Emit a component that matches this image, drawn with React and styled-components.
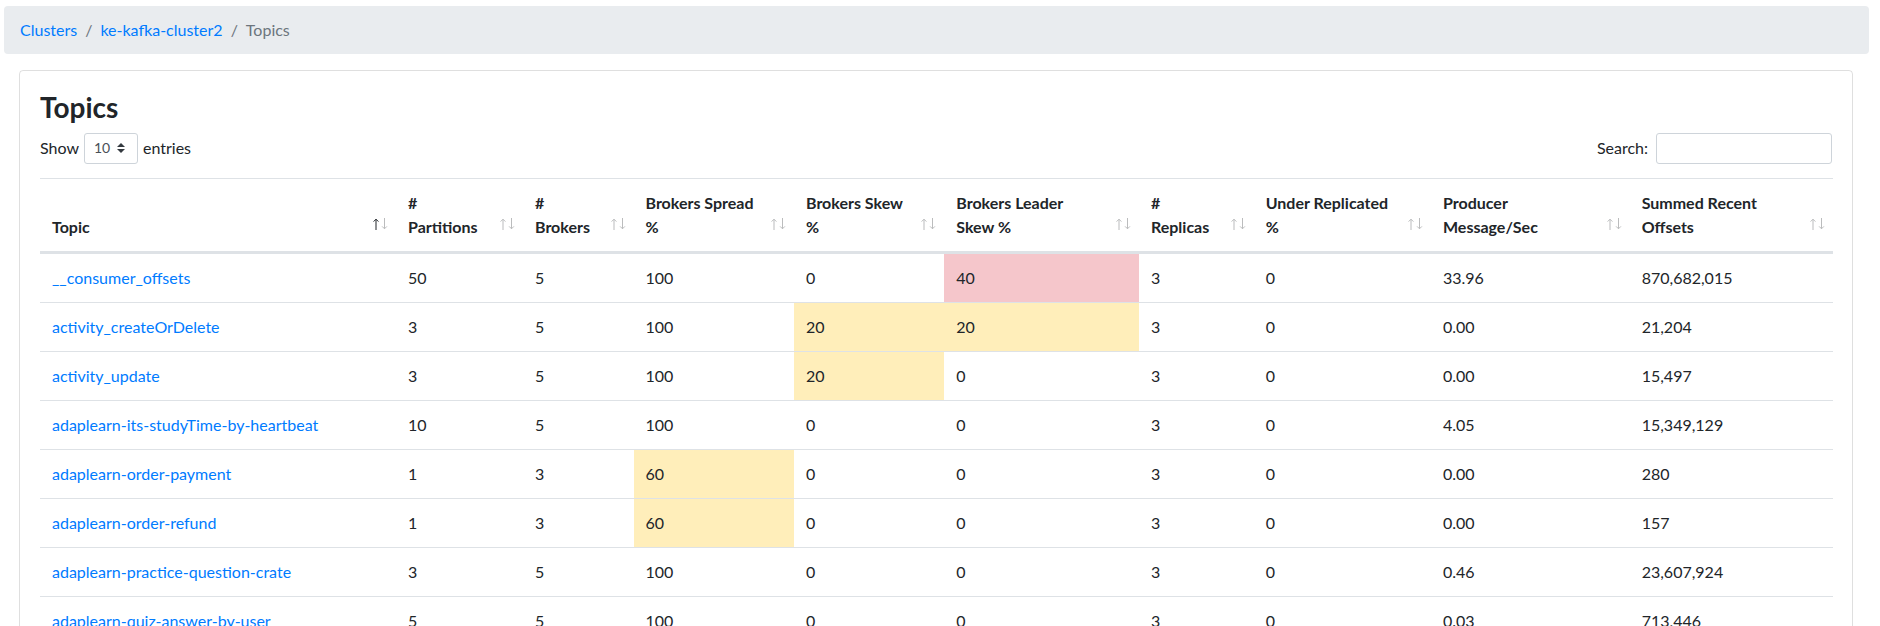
import React from "react";
import styled, { createGlobalStyle } from "styled-components";

const Global = createGlobalStyle`
  html, body {
    margin: 0;
    padding: 0;
    background: #fff;
    overflow: hidden;
  }
  body {
    font-family: Lato, "Liberation Sans", Arial, sans-serif;
    font-size: 16px;
    line-height: 24px;
    color: #212529;
  }
  * { box-sizing: border-box; }
`;

const Page = styled.div`
  padding: 6px 11px 0 4px;
`;

const Crumbs = styled.ol`
  display: flex;
  list-style: none;
  margin: 0 0 16px;
  padding: 12px 16px;
  background: #e9ecef;
  border-radius: 4px;
  line-height: 24px;
`;

const Crumb = styled.li`
  display: flex;
  color: ${(p) => (p.$active ? "#6c757d" : "#007bff")};
  &:not(:first-child)::before {
    content: "/";
    color: #6c757d;
    padding: 0 8px;
  }
`;

const CrumbLink = styled.a`
  color: #007bff;
  text-decoration: none;
`;

const Card = styled.div`
  margin: 0 16px 0 15px;
  border: 1px solid rgba(0, 0, 0, 0.125);
  border-radius: 4px;
  padding: 20px;
  min-height: 700px;
`;

const Title = styled.h3`
  margin: 0 0 8px;
  font-size: 28px;
  line-height: 1.2;
  font-weight: 700;
`;

const Controls = styled.div`
  display: flex;
  justify-content: space-between;
  align-items: center;
  height: 31px;
  margin-bottom: 14px;
`;

const Label = styled.label`
  display: flex;
  align-items: center;
  gap: ${(p) => p.$gap || 5}px;
  font-size: 16px;
`;

const SelectBox = styled.div`
  position: relative;
  width: 54px;
  height: 31px;
  border: 1px solid #ced4da;
  border-radius: 3px;
  padding-left: 9px;
  display: flex;
  align-items: center;
  font-size: 14px;
  color: #495057;
`;

const SelectArrow = styled.svg`
  position: absolute;
  right: 12px;
  top: 50%;
  margin-top: -5px;
`;

const SearchInput = styled.input`
  width: 176px;
  height: 31px;
  border: 1px solid #ced4da;
  border-radius: 3px;
  font-size: 14px;
  padding: 4px 8px;
  outline: none;
`;

const Table = styled.table`
  width: 100%;
  table-layout: fixed;
  border-collapse: separate;
  border-spacing: 0;
`;

const Col = styled.col`
  width: ${(p) => p.$w}px;
`;

const Th = styled.th`
  position: relative;
  text-align: left;
  vertical-align: bottom;
  font-weight: 700;
  line-height: 24px;
  padding: 12px 30px 12px 12px;
  border-top: 1px solid #dee2e6;
  border-bottom: 2px solid #dee2e6;
  white-space: nowrap;
`;

const SortIcon = styled.svg`
  position: absolute;
  right: 8px;
  bottom: 21px;
`;

const Td = styled.td`
  padding: 12px;
  line-height: 24px;
  border-top: 1px solid #dee2e6;
  white-space: nowrap;
  background: ${(p) =>
    p.$level === "danger"
      ? "#f5c6cb"
      : p.$level === "warning"
      ? "#ffeeba"
      : "transparent"};
`;

const TopicLink = styled.a`
  color: #007bff;
  text-decoration: none;
`;

const columns = [
  { w: 356, label: ["Topic"], active: true },
  { w: 127, label: ["#", "Partitions"] },
  { w: 110.5, label: ["#", "Brokers"] },
  { w: 160.5, label: ["Brokers Spread", "%"] },
  { w: 150.3, label: ["Brokers Skew", "%"] },
  { w: 194.7, label: ["Brokers Leader", "Skew %"] },
  { w: 114.7, label: ["#", "Replicas"] },
  { w: 177.3, label: ["Under Replicated", "%"] },
  { w: 198.7, label: ["Producer", "Message/Sec"] },
  { w: 203.3, label: ["Summed Recent", "Offsets"] },
];

const rows = [
  ["__consumer_offsets", "50", "5", "100", "0", "40", "3", "0", "33.96", "870,682,015", { 5: "danger" }],
  ["activity_createOrDelete", "3", "5", "100", "20", "20", "3", "0", "0.00", "21,204", { 4: "warning", 5: "warning" }],
  ["activity_update", "3", "5", "100", "20", "0", "3", "0", "0.00", "15,497", { 4: "warning" }],
  ["adaplearn-its-studyTime-by-heartbeat", "10", "5", "100", "0", "0", "3", "0", "4.05", "15,349,129", {}],
  ["adaplearn-order-payment", "1", "3", "60", "0", "0", "3", "0", "0.00", "280", { 3: "warning" }],
  ["adaplearn-order-refund", "1", "3", "60", "0", "0", "3", "0", "0.00", "157", { 3: "warning" }],
  ["adaplearn-practice-question-crate", "3", "5", "100", "0", "0", "3", "0", "0.46", "23,607,924", {}],
  ["adaplearn-quiz-answer-by-user", "5", "5", "100", "0", "0", "3", "0", "0.03", "713,446", {}],
  ["adaplearn-quiz-submit", "3", "5", "100", "0", "0", "3", "0", "0.00", "4,512", {}],
  ["adaplearn-video-progress", "3", "5", "100", "0", "0", "3", "0", "0.12", "98,310", {}],
];

function Sort({ active }) {
  return (
    <SortIcon width="15" height="12" viewBox="0 0 15 12" fill="none">
      <g stroke="#212529" strokeWidth="1" opacity={active ? 1 : 0.3}>
        <path d="M3 1.2V12" />
        <path d="M0.6 3.6L3 1.2L5.4 3.6" />
      </g>
      <g stroke="#212529" strokeWidth="1" opacity="0.3">
        <path d="M11.5 0V10.8" />
        <path d="M9.1 8.4L11.5 10.8L13.9 8.4" />
      </g>
    </SortIcon>
  );
}

export default function App() {
  return (
    <>
      <Global />
      <Page>
        <Crumbs>
          <Crumb>
            <CrumbLink href="#">Clusters</CrumbLink>
          </Crumb>
          <Crumb>
            <CrumbLink href="#">ke-kafka-cluster2</CrumbLink>
          </Crumb>
          <Crumb $active>Topics</Crumb>
        </Crumbs>
        <Card>
          <Title>Topics</Title>
          <Controls>
            <Label>
              Show
              <SelectBox>
                10
                <SelectArrow width="8" height="10" viewBox="0 0 4 5">
                  <path fill="#343a40" d="M2 0L0 2h4zm0 5L0 3h4z" />
                </SelectArrow>
              </SelectBox>
              entries
            </Label>
            <Label $gap={8}>
              Search:
              <SearchInput type="search" />
            </Label>
          </Controls>
          <Table>
            <colgroup>
              {columns.map((c, i) => (
                <Col key={i} $w={c.w} />
              ))}
            </colgroup>
            <thead>
              <tr>
                {columns.map((c, i) => (
                  <Th key={i}>
                    {c.label.map((l, j) => (
                      <React.Fragment key={j}>
                        {j > 0 && <br />}
                        {l}
                      </React.Fragment>
                    ))}
                    <Sort active={c.active} />
                  </Th>
                ))}
              </tr>
            </thead>
            <tbody>
              {rows.map((r, i) => {
                const levels = r[10];
                return (
                  <tr key={i}>
                    <Td>
                      <TopicLink href="#">{r[0]}</TopicLink>
                    </Td>
                    {r.slice(1, 10).map((v, j) => (
                      <Td key={j} $level={levels[j + 1]}>
                        {v}
                      </Td>
                    ))}
                  </tr>
                );
              })}
            </tbody>
          </Table>
        </Card>
      </Page>
    </>
  );
}
